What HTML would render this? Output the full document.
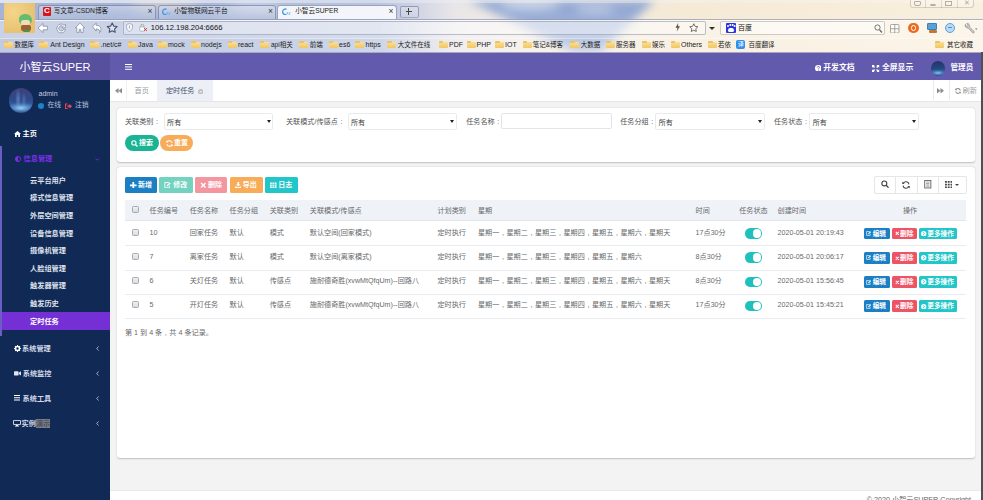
<!DOCTYPE html>
<html lang="zh-CN">
<head>
<meta charset="utf-8">
<title>小智云SUPER</title>
<style>
*{box-sizing:border-box;margin:0;padding:0}
html,body{width:983px;height:500px;overflow:hidden;background:#f3f3f4}
body{font-family:"Liberation Sans","Noto Sans CJK SC",sans-serif;font-size:7px;color:#676a6c;position:relative;line-height:1}
.a{position:absolute;white-space:nowrap}
svg{display:block}
/* ---------- browser chrome ---------- */
#chrome{left:0;top:0;width:983px;height:52px;overflow:hidden;
 background:linear-gradient(90deg,#a5b3d5 0,#adbad9 200px,#b9c4de 380px,#e9e6e8 455px,#f2ebe2 520px,#f5ead6 680px,#f9efde 983px);}
#sky1{left:0;top:0;width:983px;height:52px;filter:blur(5px)}
#sky1 i{position:absolute;display:block}
#chrome .t{font-size:6.7px;color:#1c1c1c}
#chrome .x{font-size:8.5px;color:#3a3a3a}
#chrome .bk{font-size:6.6px;color:#222}
.tab{top:4.5px;height:14.5px;border:1px solid rgba(105,115,150,.6);border-bottom:none;border-radius:3px 3px 0 0;background:linear-gradient(180deg,rgba(225,230,242,.5),rgba(205,214,234,.25))}
.tab.on{background:#f4f5fa;border-color:#9aa3bd}
.fold{width:9px;height:6.2px;background:linear-gradient(180deg,#f9df9a,#f0c662);border-radius:1px;margin-top:.6px}
.fold:before{content:"";position:absolute;left:0;top:-1.4px;width:4.5px;height:2px;background:#eec162;border-radius:1px 1px 0 0}
/* ---------- app ---------- */
#hdr{left:0;top:52px;width:983px;height:28px;background:#625aad;border-top:1px solid #aaa6c0}
#logo{left:0;top:53px;width:110px;height:27px;background:#56509d;color:#fff;font-size:11px;text-align:center;line-height:28.4px}
#side{left:0;top:80px;width:110px;height:420px;background:#112955;color:#fff}
#side .m{font-size:7.2px;color:#d3d8e6;font-weight:bold}
#side .s{font-size:7.2px;color:#dde1ec;left:30px;font-weight:bold}
#tabs{left:110px;top:80px;width:873px;height:21.5px;background:#fff;border-bottom:1px solid #e4e6ec}
.hm{font-size:7.8px;color:#fff;font-weight:bold}
.panel{background:#fff;border-radius:3px;box-shadow:0 0.5px 1.5px rgba(0,0,0,.22)}
.lab{font-size:7.13px;color:#555}
.cl{font-family:"Liberation Sans","Noto Sans CJK JP",sans-serif}
.sel{height:16.5px;width:110px;border:1px solid #e9eaec;border-radius:2px;background:#fff;font-size:7.05px;color:#3a3a3a;line-height:17.4px;padding-left:2.4px;overflow:hidden}
.sel:after{content:"";position:absolute;right:1.6px;top:5.6px;border:2.3px solid transparent;border-top:3.4px solid #222}
.btn{color:#fff;font-size:7px;text-align:center;border-radius:1.5px;font-weight:bold}
.td{font-size:7.13px;color:#676a6c}
.cm{display:inline-block;width:7.13px;text-align:center}
.cb{width:7px;height:7px;border:1px solid #a6a9b0;border-radius:1.3px;background:linear-gradient(180deg,#f0f1f2,#d9dbdf)}
.sw{width:17px;height:10.4px;border-radius:5.2px;background:#1fc0bd}
.sw:after{content:"";position:absolute;right:1px;top:1px;width:8.4px;height:8.4px;border-radius:50%;background:#fff}
.ob{height:11.8px;top:0;color:#fff;font-size:6.7px;line-height:11.8px;border-radius:1.5px;text-align:center;font-weight:bold}
</style>
</head>
<body>
<!-- ================= BROWSER CHROME ================= -->
<div id="chrome" class="a">
  <div id="sky1" class="a">
    <i style="left:0;top:0;width:983px;height:52px;clip-path:polygon(468px 0,655px 0,596px 56px,582px 56px);background:linear-gradient(180deg,#90a6d2,#a6b7da)"></i>
    <i style="left:500px;top:2px;width:60px;height:8px;border-radius:50%;background:rgba(255,255,255,.55)"></i>
    <i style="left:575px;top:6px;width:40px;height:7px;border-radius:50%;background:rgba(255,255,255,.45)"></i>
    <i style="left:130px;top:-4px;width:70px;height:12px;border-radius:50%;background:rgba(245,225,200,.55)"></i>
    <i style="left:230px;top:2px;width:50px;height:10px;border-radius:50%;background:rgba(255,255,255,.35)"></i>
    <i style="left:60px;top:8px;width:80px;height:10px;border-radius:50%;background:rgba(140,160,205,.5)"></i>
    <i style="left:160px;top:8px;width:60px;height:10px;border-radius:50%;background:rgba(135,158,205,.55)"></i>
  </div>
  <div class="a" style="left:0;top:0;width:983px;height:3px;background:linear-gradient(90deg,rgba(235,239,247,.8),rgba(235,239,247,.5) 40%,rgba(255,255,255,.2))"></div>
  <!-- nav row + bookmark row overlays -->
  <div class="a" style="left:0;top:19px;width:983px;height:18.5px;background:rgba(255,255,255,.4);border-top:1px solid rgba(110,120,150,.55);box-shadow:inset 0 1px 0 rgba(255,255,255,.7)"></div>
  <div class="a" style="left:0;top:37.5px;width:983px;height:14.5px;background:rgba(255,255,255,.3);border-top:1px solid rgba(255,255,255,.45)"></div>
  <!-- tabs -->
  <div class="a tab" style="left:37.5px;width:118.5px"></div>
  <div class="a tab" style="left:157.5px;width:118.5px"></div>
  <div class="a tab on" style="left:277.2px;width:120px"></div>
  <div class="a tab" style="left:399.7px;width:19px;top:5.5px;height:12.5px;border-bottom:1px solid rgba(120,130,160,.55);border-radius:2px"></div>
  <div class="a" style="left:42.5px;top:7.4px;width:8.6px;height:8.2px;background:#d8141c;border-radius:1px;color:#fff;font-size:8px;font-weight:bold;line-height:8.4px;text-align:center">C</div>
  <div class="a t" style="left:53.7px;top:7.8px">写文章-CSDN博客</div>
  <div class="a t x" style="left:147.5px;top:7.4px">×</div>
  <svg class="a" style="left:162px;top:7.6px" width="8.500" height="7.6" viewBox="0 0 17 15"><path d="M9 2.5A5.5 5.500 0 1 0 9 12.500" stroke="#3d9be6" stroke-width="2.600" fill="none"/><path d="M9.500 8l2.500 4.500M12 8l-2.500 4.500M13.500 9.500h3l-3 3h3" stroke="#58aef0" stroke-width="1.200" fill="none"/></svg>
  <div class="a t" style="left:174.2px;top:7.8px">小智物联网云平台</div>
  <div class="a t x" style="left:268px;top:7.4px">×</div>
  <svg class="a" style="left:282.2px;top:7.6px" width="8.500" height="7.6" viewBox="0 0 17 15"><path d="M9 2.500A5.500 5.500 0 1 0 9 12.500" stroke="#3d9be6" stroke-width="2.600" fill="none"/><path d="M9.500 8l2.500 4.500M12 8l-2.500 4.500M13.500 9.500h3l-3 3h3" stroke="#58aef0" stroke-width="1.200" fill="none"/></svg>
  <div class="a t" style="left:295.2px;top:7.8px">小智云SUPER</div>
  <div class="a t x" style="left:388.5px;top:7.4px">×</div>
  <div class="a" style="left:405.7px;top:10.7px;width:6.6px;height:.9px;background:#444"></div><div class="a" style="left:408.4px;top:8px;width:.9px;height:6.6px;background:#444"></div>
  <!-- window buttons -->
  <div class="a" style="left:910px;top:-1px;width:64px;height:9px;border:1px solid rgba(170,160,145,.45);border-radius:0 0 3px 3px;background:rgba(255,255,255,.2)"></div>
  <div class="a" style="left:925px;top:0;width:1px;height:7.5px;background:rgba(170,160,145,.35)"></div>
  <div class="a" style="left:940.5px;top:0;width:1px;height:7.5px;background:rgba(170,160,145,.35)"></div>
  <div class="a" style="left:956.5px;top:0;width:1px;height:7.5px;background:rgba(170,160,145,.35)"></div>
  <div class="a" style="left:914px;top:1px;width:6.5px;height:4.5px;border:1px solid #b3afa8;border-radius:1px 1px 2px 2px"></div>
  <div class="a" style="left:929.5px;top:3.5px;width:6px;height:2.5px;border:1px solid #b3afa8;border-radius:1px"></div>
  <div class="a" style="left:945px;top:1px;width:6.5px;height:5px;border:1px solid #b3afa8"></div>
  <div class="a t" style="left:963.5px;top:-1px;font-size:7px;color:#aaa6a0">&#10005;</div>
  <!-- nav row -->
  <svg class="a" style="left:37px;top:21.5px" width="82" height="12" viewBox="0 0 82 12" fill="#fff" stroke="#7a829e" stroke-width=".7" stroke-linejoin="round">
   <path d="M1 6l5-4.600v2.800h4.400v3.600H6v2.800z"/>
   <path d="M28.400 2.200v3.600h-3.600l1.300-1.300a2.600 2.600 0 1 0 .7 2.600l1.700.5a4.400 4.400 0 1 1-1.200-4.300z"/>
   <path d="M43 1.200L38.400 5.800h1.400v4.600h2.400V7.400h1.600v3h2.400V5.800h1.400z"/>
   <path d="M55.600 4.600l3.600-3.400v2.200c3.400 0 5.200 2 4.600 5.600-.2.900-.7 1.500-1.300 1.900.6-2.600-.6-4-3.300-4v2.200z"/>
   <path d="M75.200 1l1.500 3.100 3.400.4-2.500 2.400.6 3.400-3-1.600-3 1.600.6-3.400-2.500-2.400 3.400-.4z" stroke-width="1.100" fill="rgba(255,255,255,.35)" stroke="#4a5270"/>
  </svg>
  <div class="a" style="left:123px;top:20.8px;width:583px;height:14.6px;border:1px solid rgba(140,148,175,.6);border-radius:2px;background:rgba(255,255,255,.32)"></div>
  <svg class="a" style="left:125.7px;top:23.4px" width="7" height="9" viewBox="0 0 14 18"><path d="M7 1l6 2v6c0 4-3 6.500-6 8-3-1.500-6-4-6-8V3z" fill="rgba(255,255,255,.6)" stroke="#9aa0b4" stroke-width="1.500"/><path d="M7 5v6" stroke="#9aa0b4" stroke-width="1.600"/></svg>
  <svg class="a" style="left:138.5px;top:23.4px" width="9" height="9" viewBox="0 0 18 18"><rect x="1.500" y="8" width="10" height="8" rx="1" fill="#fff" stroke="#999" stroke-width="1.200"/><path d="M3.500 8V5.500a3 3 0 0 1 6 0V8" stroke="#999" stroke-width="1.500" fill="none"/><path d="M10.500 10.500l5 5M15.500 10.500l-5 5" stroke="#e02020" stroke-width="2"/></svg>
  <div class="a t" style="left:150.7px;top:23.8px;font-size:7.6px;color:#111">106.12.198.204:6666</div>
  <svg class="a" style="left:674.5px;top:23.4px" width="5.500" height="8.500" viewBox="0 0 11 17"><path d="M6.500 0L1 9.500h4L3.500 17 10 6.500H6z" fill="#555"/></svg>
  <svg class="a" style="left:689px;top:23px" width="9.600" height="9.200" viewBox="0 0 20 19"><path d="M10 1.500l2.600 5.400 5.900.8-4.300 4.100 1 5.900-5.200-2.800-5.200 2.800 1-5.900L1.500 7.700l5.900-.8z" fill="rgba(255,255,255,.5)" stroke="#555" stroke-width="1.700" stroke-linejoin="round"/></svg>
  <div class="a" style="left:708.7px;top:26.5px;border:3px solid transparent;border-top:3.8px solid #333"></div>
  <div class="a" style="left:720px;top:20.8px;width:164.5px;height:14.6px;border:1px solid rgba(175,168,160,.6);border-radius:2px;background:rgba(255,255,255,.5)"></div>
  <div class="a" style="left:725.7px;top:23.3px;width:10px;height:10px;background:#2a35dd;border-radius:1px;overflow:hidden"><div class="a" style="left:2px;top:4.5px;width:6px;height:4.5px;border-radius:3px 3px 2px 2px;background:#fff"></div><div class="a" style="left:1px;top:1.5px;width:2px;height:2.5px;border-radius:1px;background:#fff;box-shadow:2.3px -1px 0 #fff,4.7px -1px 0 #fff,6.6px 0 0 #fff"></div></div>
  <div class="a t" style="left:738px;top:23.6px;font-size:7px;color:#111">百度</div>
  <svg class="a" style="left:874px;top:23.5px" width="8.500" height="9" viewBox="0 0 17 18"><circle cx="7" cy="7" r="5.200" fill="none" stroke="#666" stroke-width="1.800"/><path d="M11 11.500l5 5.500" stroke="#666" stroke-width="2.400"/></svg>
  <svg class="a" style="left:890px;top:23.5px" width="9.500" height="9.500" viewBox="0 0 19 19"><rect x="1" y="1" width="17" height="17" rx="2" fill="rgba(255,255,255,.6)" stroke="#8c8c8c" stroke-width="1.500"/><path d="M9.500 1v17M1 9.500h17" stroke="#8c8c8c" stroke-width="1.500"/></svg>
  <div class="a" style="left:908.3px;top:22.8px;width:10.5px;height:10.5px;background:#ee6a1f;border-radius:50%"><div class="a" style="left:2.5px;top:2.5px;width:5.5px;height:5.5px;border-radius:50%;border:1.2px solid #fff"></div></div>
  <div class="a" style="left:926.8px;top:23px;width:10px;height:6.5px;background:#5a9fd6;border:1px solid #3c7fba;border-radius:1px"></div><div class="a" style="left:929px;top:30px;width:8px;height:2.5px;background:#c07a30;border-radius:1px"></div>
  <div class="a" style="left:945px;top:23px;width:10px;height:10px;background:#b9d9f6;border:1.2px solid #5e9edc;border-radius:50%"><div class="a" style="left:1.8px;top:3.3px;width:4px;height:1.2px;background:#4a8fd0"></div></div>
  <svg class="a" style="left:964px;top:22.5px" width="14" height="11" viewBox="0 0 28 22"><path d="M3 2.500a5 5 0 0 0 5.500 7.500L17 19.500a2 2 0 0 0 3-3L11 8A5 5 0 0 0 5.500 1L8 4.500 6.500 7 3.500 6.500z" fill="#c9c9c9" stroke="#8a8a8a" stroke-width="1.200"/><path d="M22 11l2.500 3 2.500-3z" fill="#777"/></svg>
  <!-- bookmarks row -->
  <div class="a" id="bm" style="left:0;top:0">
   <div class="a fold" style="left:3.7px;top:41.5px"></div><div class="a t bk" style="left:14.5px;top:41.5px;font-size:6.5px">数据库</div>
   <div class="a fold" style="left:39.4px;top:41.5px"></div><div class="a t bk" style="left:50.3px;top:41.2px;font-size:7px">Ant Design</div>
   <div class="a fold" style="left:90.0px;top:41.5px"></div><div class="a t bk" style="left:100.5px;top:41.2px;font-size:7px">.net/c#</div>
   <div class="a fold" style="left:127.5px;top:41.5px"></div><div class="a t bk" style="left:138.0px;top:41.2px;font-size:7px">Java</div>
   <div class="a fold" style="left:157.5px;top:41.5px"></div><div class="a t bk" style="left:168.0px;top:41.2px;font-size:7px">mock</div>
   <div class="a fold" style="left:191.0px;top:41.5px"></div><div class="a t bk" style="left:201.0px;top:41.2px;font-size:7px">nodejs</div>
   <div class="a fold" style="left:227.5px;top:41.5px"></div><div class="a t bk" style="left:238.0px;top:41.2px;font-size:7px">react</div>
   <div class="a fold" style="left:259.7px;top:41.5px"></div><div class="a t bk" style="left:271.0px;top:41.5px;font-size:6.5px">api相关</div>
   <div class="a fold" style="left:299.0px;top:41.5px"></div><div class="a t bk" style="left:309.7px;top:41.5px;font-size:6.5px">前端</div>
   <div class="a fold" style="left:328.5px;top:41.5px"></div><div class="a t bk" style="left:339.0px;top:41.2px;font-size:7px">es6</div>
   <div class="a fold" style="left:355.0px;top:41.5px"></div><div class="a t bk" style="left:365.5px;top:41.2px;font-size:7px">https</div>
   <div class="a fold" style="left:387.0px;top:41.5px"></div><div class="a t bk" style="left:397.7px;top:41.5px;font-size:6.5px">大文件在线</div>
   <div class="a fold" style="left:438.5px;top:41.5px"></div><div class="a t bk" style="left:449.0px;top:41.2px;font-size:7px">PDF</div>
   <div class="a fold" style="left:466.7px;top:41.5px"></div><div class="a t bk" style="left:476.5px;top:41.2px;font-size:7px">PHP</div>
   <div class="a fold" style="left:495.0px;top:41.5px"></div><div class="a t bk" style="left:505.0px;top:41.2px;font-size:7px">IOT</div>
   <div class="a fold" style="left:522.5px;top:41.5px"></div><div class="a t bk" style="left:532.7px;top:41.5px;font-size:6.5px">笔记&amp;博客</div>
   <div class="a fold" style="left:570.0px;top:41.5px"></div><div class="a t bk" style="left:580.7px;top:41.5px;font-size:6.5px">大数据</div>
   <div class="a fold" style="left:606.0px;top:41.5px"></div><div class="a t bk" style="left:616.0px;top:41.5px;font-size:6.5px">服务器</div>
   <div class="a fold" style="left:642.0px;top:41.5px"></div><div class="a t bk" style="left:652.0px;top:41.5px;font-size:6.5px">娱乐</div>
   <div class="a fold" style="left:670.7px;top:41.5px"></div><div class="a t bk" style="left:681.0px;top:41.2px;font-size:7px">Others</div>
   <div class="a fold" style="left:708.0px;top:41.5px"></div><div class="a t bk" style="left:718.0px;top:41.5px;font-size:6.5px">若依</div>
   <div class="a fold" style="left:935.0px;top:41.5px"></div><div class="a t bk" style="left:947.0px;top:41.5px;font-size:6.5px">其它收藏</div>
   <div class="a" style="left:736px;top:39.6px;width:9.4px;height:9.4px;background:#2d8ef0;border-radius:2px;color:#fff;font-size:6px;line-height:9.4px;text-align:center">译</div><div class="a t bk" style="left:748.5px;top:41.5px;font-size:6.5px">百度翻译</div>
  </div>
  <!-- avatar -->
  <div class="a" style="left:4px;top:3px;width:31px;height:30px;background:#e8c272;border-radius:1px;overflow:hidden">
    <div class="a" style="left:0;top:0;width:31px;height:30px;background:radial-gradient(circle at 30% 30%,rgba(245,215,140,.9),rgba(228,185,100,0) 70%)"></div>
    <div class="a" style="left:14.5px;top:11px;width:13.5px;height:10px;border-radius:6px 7px 4px 4px;background:#62bd6c"></div>
    <div class="a" style="left:17px;top:16.5px;width:8.5px;height:5.5px;border-radius:3px;background:#f1dcc0"></div>
    <div class="a" style="left:17px;top:21.5px;width:10px;height:6.5px;border-radius:2px;background:#9a6330"></div>
    <div class="a" style="left:19px;top:27px;width:7px;height:2px;border-radius:1px;background:#4f8f58"></div>
  </div>
</div>

<!-- ================= APP HEADER ================= -->
<div id="hdr" class="a"></div>
<div id="logo" class="a">小智云SUPER</div>
<div class="a" style="left:125px;top:63.5px;width:7px;height:1.4px;background:#fff;box-shadow:0 2.4px 0 #fff,0 4.8px 0 #fff"></div>
<svg class="a" style="left:814.8px;top:64.8px" width="6.6" height="6.6" viewBox="0 0 16 16"><circle cx="8" cy="8" r="8" fill="#fff"/><path d="M5.4 6.2c0-1.7 1.200-2.7 2.700-2.7s2.7 1 2.7 2.3c0 1.800-2.2 1.900-2.2 3.6" stroke="#625aad" stroke-width="2" fill="none"/><circle cx="8.6" cy="12" r="1.3" fill="#625aad"/></svg>
<div class="a hm" style="left:823.3px;top:64.2px">开发文档</div>
<svg class="a" style="left:872.4px;top:64.6px" width="7.2" height="7.2" viewBox="0 0 14 14"><path d="M0 0h5.5L3.700 1.800 6 4.1 4.1 6 1.800 3.700 0 5.5zM14 0v5.5L12.200 3.700 9.900 6 8 4.1l2.300-2.300L8.5 0zM0 14V8.5l1.800 1.800L4.1 8 6 9.900 3.700 12.200 5.5 14zM14 14H8.5l1.800-1.800L8 9.900 9.900 8l2.300 2.300L14 8.5z" fill="#fff"/></svg>
<div class="a hm" style="left:882px;top:64.2px">全屏显示</div>
<div class="a" style="left:931px;top:61.2px;width:14.4px;height:14.4px;border-radius:50%;background:radial-gradient(ellipse 60% 22% at 50% 80%,rgba(150,200,240,.9),rgba(85,145,205,.5) 60%,rgba(0,0,0,0) 100%),linear-gradient(180deg,#26346a 0,#264680 50%,#3465a5 75%,#1d3a72 100%)"></div>
<div class="a hm" style="left:950.5px;top:64.2px;font-size:7.6px">管理员</div>

<!-- ================= SIDEBAR ================= -->
<div id="side" class="a">
 <div class="a" style="left:8.5px;top:8px;width:24.5px;height:24.5px;border-radius:50%;background:radial-gradient(ellipse 60% 22% at 50% 80%,rgba(160,210,245,.95),rgba(95,155,215,.55) 60%,rgba(0,0,0,0) 100%),radial-gradient(ellipse 12% 45% at 38% 45%,rgba(120,165,225,.55),rgba(0,0,0,0) 100%),radial-gradient(ellipse 10% 35% at 62% 50%,rgba(110,150,215,.45),rgba(0,0,0,0) 100%),linear-gradient(180deg,#3d3f7a 0,#2f4a8a 50%,#3a68a8 75%,#22407a 100%)"></div>
 <div class="a" style="left:38.5px;top:10.3px;font-size:7px;color:#c3cbe0">admin</div>
 <div class="a" style="left:38px;top:23.3px;width:6px;height:6px;border-radius:50%;background:#1c84c6"></div>
 <div class="a" style="left:47.5px;top:22.4px;font-size:6.8px;color:#b8c2dc">在线</div>
 <svg class="a" style="left:65px;top:23px" width="7" height="6.5" viewBox="0 0 14 13"><path d="M0 1h5v2H2v7h3v2H0zM5 4.5h4V1.5L14 6.5 9 11.5V8.5H5z" fill="#ed4757"/></svg>
 <div class="a" style="left:75px;top:22.4px;font-size:6.8px;color:#b8c2dc">注销</div>
 <svg class="a" style="left:13.5px;top:50.5px" width="7" height="6" viewBox="0 0 14 12"><path d="M7 0l7 6h-2v6H8.5V8h-3v4H2V6H0z" fill="#fff"/></svg>
 <div class="a m" style="left:22.5px;top:49.8px;color:#fff">主页</div>
 <div class="a" style="left:0;top:66px;width:2px;height:190px;background:#6b5dc2"></div>
 <svg class="a" style="left:15px;top:76px" width="6" height="6" viewBox="0 0 12 12"><circle cx="6" cy="6" r="5" fill="none" stroke="#7d2fe6" stroke-width="2"/><path d="M6 1a5 5 0 0 0 0 10z" fill="#7d2fe6"/></svg>
 <div class="a m" style="left:23.5px;top:75.3px;color:#7d2fe6">信息管理</div>
 <svg class="a" style="left:95px;top:77.5px" width="4.5" height="3" viewBox="0 0 9 6"><path d="M1 1l3.5 3.5L8 1" stroke="#7d2fe6" stroke-width="1.6" fill="none"/></svg>
 <div class="a s" style="top:96.7px">云平台用户</div>
 <div class="a s" style="top:114.3px">模式信息管理</div>
 <div class="a s" style="top:131.9px">外层空间管理</div>
 <div class="a s" style="top:149.6px">设备信息管理</div>
 <div class="a s" style="top:167.2px">摄像机管理</div>
 <div class="a s" style="top:184.8px">人脸组管理</div>
 <div class="a s" style="top:202.4px">触发器管理</div>
 <div class="a s" style="top:220.0px">触发历史</div>
 <div class="a" style="left:2px;top:232.4px;width:108px;height:17.6px;background:#7430d4"></div>
 <div class="a s" style="top:237.7px;color:#fff">定时任务</div>
 <svg class="a" style="left:13.5px;top:264.8px" width="7" height="7" viewBox="0 0 16 16"><circle cx="8" cy="8" r="4.6" fill="none" stroke="#fff" stroke-width="3.6"/><path d="M8 0v16M0 8h16M2.3 2.3l11.4 11.4M13.7 2.3L2.3 13.7" stroke="#fff" stroke-width="2.4" stroke-dasharray="3 10"/></svg>
 <div class="a m" style="left:22.0px;top:264.7px">系统管理</div>
 <svg class="a" style="left:96px;top:265.5px" width="3" height="5" viewBox="0 0 6 10"><path d="M5 1L1.5 5 5 9" stroke="#c9d0e2" stroke-width="1.6" fill="none"/></svg>
 <svg class="a" style="left:13.6px;top:291.2px" width="7" height="4.8" viewBox="0 0 16 11"><rect x="0" y="0.5" width="10.5" height="10" rx="2" fill="#e3e6f0"/><path d="M11 4l5-3.5v10L11 7z" fill="#e3e6f0"/></svg>
 <div class="a m" style="left:22.7px;top:289.8px">系统监控</div>
 <svg class="a" style="left:96px;top:290.6px" width="3" height="5" viewBox="0 0 6 10"><path d="M5 1L1.5 5 5 9" stroke="#c9d0e2" stroke-width="1.6" fill="none"/></svg>
 <svg class="a" style="left:13.5px;top:315.4px" width="6.6" height="5.6" viewBox="0 0 12 10"><path d="M0 1h12M0 5h12M0 9h12" stroke="#fff" stroke-width="1.9"/></svg>
 <div class="a m" style="left:22.5px;top:314.9px">系统工具</div>
 <svg class="a" style="left:96px;top:315.7px" width="3" height="5" viewBox="0 0 6 10"><path d="M5 1L1.5 5 5 9" stroke="#c9d0e2" stroke-width="1.6" fill="none"/></svg>
 <svg class="a" style="left:13px;top:340.3px" width="8" height="6.4" viewBox="0 0 16 13"><rect x="0.8" y="0.8" width="14.4" height="8.6" rx="1" fill="none" stroke="#fff" stroke-width="1.7"/><path d="M6 10h4v1.6h2V13H4v-1.4h2z" fill="#fff"/></svg>
 <div class="a m" style="left:21.5px;top:340.0px">实例<span style="background:#7c7e86;color:#4a4f5e">演示</span></div>
 <svg class="a" style="left:96px;top:340.8px" width="3" height="5" viewBox="0 0 6 10"><path d="M5 1L1.5 5 5 9" stroke="#c9d0e2" stroke-width="1.6" fill="none"/></svg>
</div>

<!-- ================= TABS BAR ================= -->
<div id="tabs" class="a">
 <svg class="a" style="left:5px;top:8.2px" width="7" height="5.6" viewBox="0 0 14 11"><path d="M7 0v11L0 5.5zM14 0v11L7 5.5z" fill="#8a8d92"/></svg>
 <div class="a" style="left:16px;top:0;width:1px;height:20px;background:#eef0f3"></div>
 <div class="a" style="left:24.6px;top:6.8px;font-size:7.2px;color:#9a9da2">首页</div>
 <div class="a" style="left:47px;top:0;width:56px;height:21px;background:#eceff5"></div>
 <div class="a" style="left:56px;top:8.1px;font-size:7.13px;color:#3f5170">定时任务</div>
 <svg class="a" style="left:88px;top:8.6px" width="5.4" height="5.4" viewBox="0 0 10 10"><circle cx="5" cy="5" r="5" fill="#bcbfc6"/><path d="M3.2 3.2l3.6 3.6M6.8 3.2L3.2 6.8" stroke="#fff" stroke-width="1.2"/></svg>
 <div class="a" style="left:822.5px;top:0;width:1px;height:20px;background:#e9ebef"></div>
 <svg class="a" style="left:827.4px;top:8.2px" width="7" height="5.6" viewBox="0 0 14 11"><path d="M0 0v11l7-5.5zM7 0v11l7-5.5z" fill="#8a8d92"/></svg>
 <div class="a" style="left:839px;top:0;width:1px;height:20px;background:#e9ebef"></div>
 <svg class="a" style="left:844.5px;top:8px" width="6" height="6" viewBox="0 0 12 12"><path d="M10.5 5A4.6 4.6 0 0 0 2 3.4M1.5 7A4.6 4.6 0 0 0 10 8.6" stroke="#8e9196" stroke-width="2.1" fill="none"/><path d="M0.2 0.4v4.2h4.2zM11.8 11.6V7.4H7.6z" fill="#8e9196"/></svg>
 <div class="a" style="left:852.6px;top:7.3px;font-size:7.2px;color:#9b9ea3">刷新</div>
</div>

<!-- ================= CONTENT ================= -->
<div id="content" class="a" style="left:110px;top:101px;width:873px;height:399px">
 <div class="a panel" style="left:7.0px;top:6.8px;width:857.5px;height:54px"></div>
 <div class="a lab" style="left:15.0px;top:18.1px">关联类别<span class="cm">:</span></div>
 <div class="a sel" style="left:53.7px;top:12.0px;width:109.7px">所有</div>
 <div class="a lab" style="left:176.0px;top:18.1px">关联模式/传感点<span class="cm">:</span></div>
 <div class="a sel" style="left:237.6px;top:12.0px;width:109.0px">所有</div>
 <div class="a lab" style="left:356.2px;top:18.1px">任务名称<span class="cm">:</span></div>
 <div class="a" style="left:391.4px;top:12.0px;width:110.4px;height:16.4px;border:1px solid #e2e4e8;border-radius:2px;background:#fff"></div>
 <div class="a lab" style="left:510.2px;top:18.1px">任务分组<span class="cm">:</span></div>
 <div class="a sel" style="left:545.4px;top:12.0px;width:109.4px">所有</div>
 <div class="a lab" style="left:664.0px;top:18.1px">任务状态<span class="cm">:</span></div>
 <div class="a sel" style="left:699.4px;top:12.0px;width:109.4px">所有</div>
 <div class="a btn" style="left:15.0px;top:34.2px;width:33.8px;height:16.2px;border-radius:8.1px;background:#1ab394;line-height:16.2px;padding-left:8px">搜索</div>
 <svg class="a" style="left:20.5px;top:38.9px" width="7" height="7" viewBox="0 0 12 12"><circle cx="5" cy="5" r="3.6" fill="none" stroke="#fff" stroke-width="1.9"/><path d="M7.6 7.6l3.6 3.6" stroke="#fff" stroke-width="2.2"/></svg>
 <div class="a btn" style="left:50.4px;top:34.2px;width:33px;height:16.2px;border-radius:8.1px;background:#f8ac59;line-height:16.2px;padding-left:8px">重置</div>
 <svg class="a" style="left:56.2px;top:38.9px" width="7" height="7" viewBox="0 0 12 12"><path d="M10.5 5A4.6 4.6 0 0 0 2 3.4M1.5 7A4.6 4.6 0 0 0 10 8.6" stroke="#fff" stroke-width="1.9" fill="none"/><path d="M0.4 0.8v3.6h3.6zM11.6 11.2V7.6H8z" fill="#fff"/></svg>
 <div class="a panel" style="left:7.0px;top:65.5px;width:857.5px;height:291.7px"></div>
 <div class="a btn" style="left:15.2px;top:75.8px;width:32.2px;height:16.5px;background:#1c7fc4;line-height:16.5px;padding-left:7.5px">新增</div>
 <svg class="a" style="left:20.2px;top:80.7px" width="6.6" height="6.6" viewBox="0 0 12 12"><path d="M4.4 0h3.2v4.4H12v3.2H7.6V12H4.4V7.6H0V4.4h4.4z" fill="#fff"/></svg>
 <div class="a btn" style="left:49.4px;top:75.8px;width:34.0px;height:16.5px;background:#73d2c0;line-height:16.5px;padding-left:7.5px">修改</div>
 <svg class="a" style="left:54.4px;top:80.7px" width="6.6" height="6.6" viewBox="0 0 12 12"><path d="M9 1H1.5v9.5H10V7" stroke="#fff" stroke-width="1.6" fill="none"/><path d="M5 8l.6-2.4L10.4.8l1.8 1.8-4.8 4.8z" fill="#fff"/></svg>
 <div class="a btn" style="left:85.0px;top:75.8px;width:32.4px;height:16.5px;background:#f3969f;line-height:16.5px;padding-left:7.5px">删除</div>
 <svg class="a" style="left:90.0px;top:80.7px" width="6.6" height="6.6" viewBox="0 0 12 12"><path d="M2 2l8 8M10 2l-8 8" stroke="#fff" stroke-width="2.6"/></svg>
 <div class="a btn" style="left:119.6px;top:75.8px;width:33.0px;height:16.5px;background:#f8ac59;line-height:16.5px;padding-left:7.5px">导出</div>
 <svg class="a" style="left:124.6px;top:80.7px" width="6.6" height="6.6" viewBox="0 0 12 12"><path d="M4.5 0h3v4H10L6 8 2 4h2.5z" fill="#fff"/><path d="M0 8h3l1.5 1.5h3L9 8h3v4H0z" fill="#fff"/></svg>
 <div class="a btn" style="left:155.0px;top:75.8px;width:33.2px;height:16.5px;background:#23c6c8;line-height:16.5px;padding-left:7.5px">日志</div>
 <svg class="a" style="left:160.0px;top:80.7px" width="6.6" height="6.6" viewBox="0 0 12 12"><path d="M0 1h12v10H0z" fill="#fff"/><path d="M0 4.4h12M0 7.6h12M4 1v10M8 1v10" stroke="#23c6c8" stroke-width="1"/></svg>
 <div class="a" style="left:763.5px;top:74.6px;width:93px;height:18px;border:1px solid #e4e6ea;border-radius:2px;background:#fff"></div>
 <div class="a" style="left:785.2px;top:74.9px;width:1px;height:17.8px;background:#e4e6ea"></div>
 <div class="a" style="left:806.8px;top:74.9px;width:1px;height:17.8px;background:#e4e6ea"></div>
 <div class="a" style="left:828.4px;top:74.9px;width:1px;height:17.8px;background:#e4e6ea"></div>
 <svg class="a" style="left:770.6px;top:79.2px" width="8" height="8.2" viewBox="0 0 12 12"><circle cx="5" cy="5" r="3.7" fill="none" stroke="#444" stroke-width="1.7"/><path d="M7.7 7.7l3.6 3.6" stroke="#444" stroke-width="2"/></svg>
 <svg class="a" style="left:792.0px;top:79.6px" width="8" height="8" viewBox="0 0 12 12"><path d="M10.5 5A4.6 4.6 0 0 0 2 3.4M1.5 7A4.6 4.6 0 0 0 10 8.6" stroke="#444" stroke-width="1.7" fill="none"/><path d="M0.4 0.8v3.6h3.6zM11.6 11.2V7.6H8z" fill="#444"/></svg>
 <svg class="a" style="left:814.0px;top:79.4px" width="7.6" height="8.4" viewBox="0 0 10 12"><rect x=".6" y=".6" width="8.8" height="10.8" fill="none" stroke="#555" stroke-width="1.2"/><path d="M2.5 3h5M2.5 5h5M2.5 7h5M2.5 9h5" stroke="#777" stroke-width=".9"/></svg>
 <svg class="a" style="left:835.0px;top:79.8px" width="7.4" height="7.4" viewBox="0 0 12 12"><path d="M0 0h3v3H0zM4.5 0h3v3h-3zM9 0h3v3H9zM0 4.5h3v3H0zM4.5 4.5h3v3h-3zM9 4.5h3v3H9zM0 9h3v3H0zM4.5 9h3v3h-3zM9 9h3v3H9z" fill="#444"/></svg>
 <div class="a" style="left:844.6px;top:83.2px;border:2px solid transparent;border-top:2.4px solid #444"></div>
 <div class="a" style="left:15.2px;top:99.0px;width:840.6px;height:21.2px;background:#eff3f8;border-bottom:1px solid #e2e6ec"></div>
 <div class="a cb" style="left:21.8px;top:104.6px"></div>
 <div class="a td" style="left:39.6px;top:106.6px">任务编号</div>
 <div class="a td" style="left:79.7px;top:106.6px">任务名称</div>
 <div class="a td" style="left:119.6px;top:106.6px">任务分组</div>
 <div class="a td" style="left:159.7px;top:106.6px">关联类别</div>
 <div class="a td" style="left:199.8px;top:106.6px">关联模式/传感点</div>
 <div class="a td" style="left:327.4px;top:106.6px">计划类别</div>
 <div class="a td" style="left:368.0px;top:106.6px">星期</div>
 <div class="a td" style="left:585.6px;top:106.6px">时间</div>
 <div class="a td" style="left:629.2px;top:106.6px">任务状态</div>
 <div class="a td" style="left:667.6px;top:106.6px">创建时间</div>
 <div class="a td" style="left:793.0px;top:106.6px">操作</div>
 <div class="a" style="left:15.2px;top:144.3px;width:840.6px;height:1px;background:#e9ebee"></div>
 <div class="a cb" style="left:21.8px;top:127.5px"></div>
 <div class="a td" style="left:39.6px;top:128.5px">10</div>
 <div class="a td" style="left:79.7px;top:128.5px">回家任务</div>
 <div class="a td" style="left:119.6px;top:128.5px">默认</div>
 <div class="a td" style="left:159.7px;top:128.5px">模式</div>
 <div class="a td" style="left:199.8px;top:128.5px">默认空间(回家模式)</div>
 <div class="a td" style="left:327.4px;top:128.5px">定时执行</div>
 <div class="a td" style="left:368.0px;top:128.5px">星期一<span class="cm">,</span>星期二<span class="cm">,</span>星期三<span class="cm">,</span>星期四<span class="cm">,</span>星期五<span class="cm">,</span>星期六<span class="cm">,</span>星期天</div>
 <div class="a td" style="left:585.6px;top:128.5px">17点30分</div>
 <div class="a td" style="left:667.6px;top:128.5px">2020-05-01 20:19:43</div>
 <div class="a sw" style="left:635.0px;top:127.2px"></div>
 <div class="a" style="left:753.7px;top:126.7px;width:94px;height:12px"><div class="a ob" style="left:0;width:26.3px;background:#1c7fc4;padding-left:5px">编辑</div><svg class="a" style="left:2.6px;top:3.6px" width="5" height="5" viewBox="0 0 12 12"><path d="M9 1H1.5v9.5H10V7" stroke="#fff" stroke-width="1.6" fill="none"/><path d="M5 8l.6-2.4L10.4.8l1.8 1.8-4.8 4.8z" fill="#fff"/></svg><div class="a ob" style="left:28.1px;width:25px;background:#ed5565;padding-left:5px">删除</div><svg class="a" style="left:31px;top:3.8px" width="4.6" height="4.6" viewBox="0 0 12 12"><path d="M2 2l8 8M10 2l-8 8" stroke="#fff" stroke-width="2.8"/></svg><div class="a ob" style="left:55px;width:38.3px;background:#23c6c8;padding-left:5.5px">更多操作</div><svg class="a" style="left:57.6px;top:3.4px" width="5.4" height="5.4" viewBox="0 0 12 12"><circle cx="6" cy="6" r="6" fill="#fff"/><path d="M4.6 3l3.2 3-3.2 3" stroke="#23c6c8" stroke-width="1.8" fill="none"/></svg></div>
 <div class="a" style="left:15.2px;top:168.5px;width:840.6px;height:1px;background:#e9ebee"></div>
 <div class="a cb" style="left:21.8px;top:151.7px"></div>
 <div class="a td" style="left:39.6px;top:152.7px">7</div>
 <div class="a td" style="left:79.7px;top:152.7px">离家任务</div>
 <div class="a td" style="left:119.6px;top:152.7px">默认</div>
 <div class="a td" style="left:159.7px;top:152.7px">模式</div>
 <div class="a td" style="left:199.8px;top:152.7px">默认空间(离家模式)</div>
 <div class="a td" style="left:327.4px;top:152.7px">定时执行</div>
 <div class="a td" style="left:368.0px;top:152.7px">星期一<span class="cm">,</span>星期二<span class="cm">,</span>星期三<span class="cm">,</span>星期四<span class="cm">,</span>星期五<span class="cm">,</span>星期六</div>
 <div class="a td" style="left:585.6px;top:152.7px">8点30分</div>
 <div class="a td" style="left:667.6px;top:152.7px">2020-05-01 20:06:17</div>
 <div class="a sw" style="left:635.0px;top:151.4px"></div>
 <div class="a" style="left:753.7px;top:150.9px;width:94px;height:12px"><div class="a ob" style="left:0;width:26.3px;background:#1c7fc4;padding-left:5px">编辑</div><svg class="a" style="left:2.6px;top:3.6px" width="5" height="5" viewBox="0 0 12 12"><path d="M9 1H1.5v9.5H10V7" stroke="#fff" stroke-width="1.6" fill="none"/><path d="M5 8l.6-2.4L10.4.8l1.8 1.8-4.8 4.8z" fill="#fff"/></svg><div class="a ob" style="left:28.1px;width:25px;background:#ed5565;padding-left:5px">删除</div><svg class="a" style="left:31px;top:3.8px" width="4.6" height="4.6" viewBox="0 0 12 12"><path d="M2 2l8 8M10 2l-8 8" stroke="#fff" stroke-width="2.8"/></svg><div class="a ob" style="left:55px;width:38.3px;background:#23c6c8;padding-left:5.5px">更多操作</div><svg class="a" style="left:57.6px;top:3.4px" width="5.4" height="5.4" viewBox="0 0 12 12"><circle cx="6" cy="6" r="6" fill="#fff"/><path d="M4.6 3l3.2 3-3.2 3" stroke="#23c6c8" stroke-width="1.8" fill="none"/></svg></div>
 <div class="a" style="left:15.2px;top:192.7px;width:840.6px;height:1px;background:#e9ebee"></div>
 <div class="a cb" style="left:21.8px;top:175.9px"></div>
 <div class="a td" style="left:39.6px;top:176.9px">6</div>
 <div class="a td" style="left:79.7px;top:176.9px">关灯任务</div>
 <div class="a td" style="left:119.6px;top:176.9px">默认</div>
 <div class="a td" style="left:159.7px;top:176.9px">传感点</div>
 <div class="a td" style="left:199.8px;top:176.9px">施耐德奇胜(xvwMtQfqUm)--回路八</div>
 <div class="a td" style="left:327.4px;top:176.9px">定时执行</div>
 <div class="a td" style="left:368.0px;top:176.9px">星期一<span class="cm">,</span>星期二<span class="cm">,</span>星期三<span class="cm">,</span>星期四<span class="cm">,</span>星期五<span class="cm">,</span>星期六<span class="cm">,</span>星期天</div>
 <div class="a td" style="left:585.6px;top:176.9px">8点30分</div>
 <div class="a td" style="left:667.6px;top:176.9px">2020-05-01 15:56:45</div>
 <div class="a sw" style="left:635.0px;top:175.6px"></div>
 <div class="a" style="left:753.7px;top:175.1px;width:94px;height:12px"><div class="a ob" style="left:0;width:26.3px;background:#1c7fc4;padding-left:5px">编辑</div><svg class="a" style="left:2.6px;top:3.6px" width="5" height="5" viewBox="0 0 12 12"><path d="M9 1H1.5v9.5H10V7" stroke="#fff" stroke-width="1.6" fill="none"/><path d="M5 8l.6-2.4L10.4.8l1.8 1.8-4.8 4.8z" fill="#fff"/></svg><div class="a ob" style="left:28.1px;width:25px;background:#ed5565;padding-left:5px">删除</div><svg class="a" style="left:31px;top:3.8px" width="4.6" height="4.6" viewBox="0 0 12 12"><path d="M2 2l8 8M10 2l-8 8" stroke="#fff" stroke-width="2.8"/></svg><div class="a ob" style="left:55px;width:38.3px;background:#23c6c8;padding-left:5.5px">更多操作</div><svg class="a" style="left:57.6px;top:3.4px" width="5.4" height="5.4" viewBox="0 0 12 12"><circle cx="6" cy="6" r="6" fill="#fff"/><path d="M4.6 3l3.2 3-3.2 3" stroke="#23c6c8" stroke-width="1.8" fill="none"/></svg></div>
 <div class="a" style="left:15.2px;top:216.9px;width:840.6px;height:1px;background:#e9ebee"></div>
 <div class="a cb" style="left:21.8px;top:200.1px"></div>
 <div class="a td" style="left:39.6px;top:201.1px">5</div>
 <div class="a td" style="left:79.7px;top:201.1px">开灯任务</div>
 <div class="a td" style="left:119.6px;top:201.1px">默认</div>
 <div class="a td" style="left:159.7px;top:201.1px">传感点</div>
 <div class="a td" style="left:199.8px;top:201.1px">施耐德奇胜(xvwMtQfqUm)--回路八</div>
 <div class="a td" style="left:327.4px;top:201.1px">定时执行</div>
 <div class="a td" style="left:368.0px;top:201.1px">星期一<span class="cm">,</span>星期二<span class="cm">,</span>星期三<span class="cm">,</span>星期四<span class="cm">,</span>星期五<span class="cm">,</span>星期六<span class="cm">,</span>星期天</div>
 <div class="a td" style="left:585.6px;top:201.1px">17点30分</div>
 <div class="a td" style="left:667.6px;top:201.1px">2020-05-01 15:45:21</div>
 <div class="a sw" style="left:635.0px;top:199.8px"></div>
 <div class="a" style="left:753.7px;top:199.3px;width:94px;height:12px"><div class="a ob" style="left:0;width:26.3px;background:#1c7fc4;padding-left:5px">编辑</div><svg class="a" style="left:2.6px;top:3.6px" width="5" height="5" viewBox="0 0 12 12"><path d="M9 1H1.5v9.5H10V7" stroke="#fff" stroke-width="1.6" fill="none"/><path d="M5 8l.6-2.4L10.4.8l1.8 1.8-4.8 4.8z" fill="#fff"/></svg><div class="a ob" style="left:28.1px;width:25px;background:#ed5565;padding-left:5px">删除</div><svg class="a" style="left:31px;top:3.8px" width="4.6" height="4.6" viewBox="0 0 12 12"><path d="M2 2l8 8M10 2l-8 8" stroke="#fff" stroke-width="2.8"/></svg><div class="a ob" style="left:55px;width:38.3px;background:#23c6c8;padding-left:5.5px">更多操作</div><svg class="a" style="left:57.6px;top:3.4px" width="5.4" height="5.4" viewBox="0 0 12 12"><circle cx="6" cy="6" r="6" fill="#fff"/><path d="M4.6 3l3.2 3-3.2 3" stroke="#23c6c8" stroke-width="1.8" fill="none"/></svg></div>
 <div class="a td" style="left:15.0px;top:228.6px">第 1 到 4 条<span class="cm">,</span>共 4 条记录。</div>
 <div class="a" style="left:0;top:389.0px;width:873px;height:12px;background:#fff;border-top:1px solid #e7eaec"></div>
 <div class="a" style="left:756.7px;top:395.2px;font-size:7.2px;color:#666">© 2020 小智云SUPER Copyright</div>
</div>
<div class="a" style="left:981px;top:52px;width:2px;height:448px;background:#4d4f55"></div>


</body>
</html>
